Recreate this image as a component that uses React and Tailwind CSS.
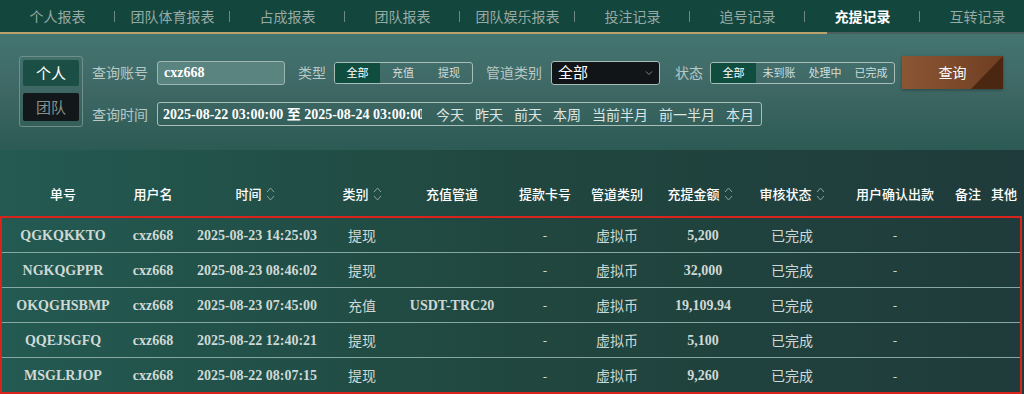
import React from 'react'

const tabs = ['个人报表', '团队体育报表', '占成报表', '团队报表', '团队娱乐报表', '投注记录', '追号记录', '充提记录', '互转记录']

const cols = 'grid grid-cols-[126px_54px_150px_64px_116px_70px_74px_92px_92px_114px_32px_40px]'

const rows = [
  { id: 'QGKQKKTO', time: '2025-08-23 14:25:03', type: '提现', pipe: '', amount: '5,200' },
  { id: 'NGKQGPPR', time: '2025-08-23 08:46:02', type: '提现', pipe: '', amount: '32,000' },
  { id: 'OKQGHSBMP', time: '2025-08-23 07:45:00', type: '充值', pipe: 'USDT-TRC20', amount: '19,109.94' },
  { id: 'QQEJSGFQ', time: '2025-08-22 12:40:21', type: '提现', pipe: '', amount: '5,100' },
  { id: 'MSGLRJOP', time: '2025-08-22 08:07:15', type: '提现', pipe: '', amount: '9,260' },
]

const cjk = "font-['Noto_Sans_CJK_SC',sans-serif]"
const serif = "font-['Liberation_Serif','Noto_Sans_CJK_SC',serif] font-bold"

const SortIcon = () => (
  <svg className="w-[9px] h-[16px] ml-1" viewBox="0 0 9 16" fill="none" stroke="#8ea19d" strokeWidth="1">
    <path d="M1 6 L4.5 2 L8 6" />
    <path d="M1 10 L4.5 14 L8 10" />
  </svg>
)

const Segments = ({ items }) => (
  <div className="flex h-[22px] border border-[#a9bdb9] rounded-[3px] overflow-hidden">
    {items.map((s, i) => (
      <div
        key={s}
        className={`flex items-center justify-center text-[11px] whitespace-nowrap ${
          i === 0 ? 'bg-[#0f4d3f] text-white w-[45px]' : 'text-[#d3ddda] w-[46px]'
        }`}
      >
        {s}
      </div>
    ))}
  </div>
)

const Header = ({ label, sort }) => (
  <div className="flex items-center justify-center text-[13px] text-white font-medium whitespace-nowrap">
    {label}
    {sort && <SortIcon />}
  </div>
)

export default function App() {
  return (
    <div className={`w-[1024px] h-[394px] overflow-hidden ${cjk} bg-[#21504a]`}>
      {/* top nav */}
      <div className="bg-[#13463d] h-[32px] flex overflow-hidden">
        {tabs.map((t, i) => (
          <div key={t} className="w-[115px] shrink-0 relative flex items-center justify-center">
            <span className={`text-[14px] whitespace-nowrap ${t === '充提记录' ? 'text-white font-bold' : 'text-[#98aaa4]'}`}>{t}</span>
            {i < tabs.length - 1 && <span className="absolute right-0 top-[11px] w-px h-[11px] bg-[#6f8983]" />}
          </div>
        ))}
      </div>
      <div className="flex h-[2px]">
        <div className="w-[827px] bg-[#bba46c]" />
        <div className="flex-1 bg-[#4b605e]" />
      </div>

      {/* filter panel */}
      <div className="h-[116px] bg-gradient-to-b from-[#447571] via-[#3e6764] to-[#2c5a54] flex pl-[19px] pt-[22px]">
        <div className="w-[64px] h-[71px] border border-[#6f8f8a] rounded-[3px] p-[3px] flex flex-col gap-[7px]">
          <div className="h-[26px] bg-[#1b4f45] rounded-[2px] text-white text-[15px] flex items-center justify-center">个人</div>
          <div className="h-[28px] bg-[#121719] rounded-[2px] text-[#86938e] text-[15px] flex items-center justify-center">团队</div>
        </div>
        <div className="ml-[9px] flex flex-col">
          <div className="flex items-center h-[33px]">
            <span className="text-[14px] text-[#b9c8c4] w-[65px]">查询账号</span>
            <div className={`w-[128px] h-[24px] bg-[#5a8480] border border-[#9db6b1] rounded-[3px] flex items-center pl-[6px] text-white text-[14px] ${serif}`}>cxz668</div>
            <span className="text-[14px] text-[#b9c8c4] ml-[13px] w-[36px]">类型</span>
            <Segments items={['全部', '充值', '提现']} />
            <span className="text-[14px] text-[#b9c8c4] ml-[13px] w-[65px]">管道类别</span>
            <div className="w-[109px] h-[24px] bg-[#111517] border border-[#a9bdb9] rounded-[3px] flex items-center justify-between pl-[6px] pr-[6px] text-white text-[15px]">
              <span>全部</span>
              <svg className="w-[8px] h-[6px]" viewBox="0 0 8 6" fill="none" stroke="#7d8a87" strokeWidth="1"><path d="M1 1.5 L4 4.5 L7 1.5" /></svg>
            </div>
            <span className="text-[14px] text-[#b9c8c4] ml-[15px] w-[35px]">状态</span>
            <Segments items={['全部', '未到账', '处理中', '已完成']} />
            <div className="ml-[7px] w-[101px] h-[33px] relative overflow-hidden bg-gradient-to-r from-[#8a5634] to-[#703e22] shadow-[0_1px_3px_rgba(0,0,0,0.35)] flex items-center justify-center text-white text-[14px]">
              <svg className="absolute right-0 top-0 w-[32px] h-[33px]" viewBox="0 0 32 33"><polygon points="32,0 32,33 0,33" fill="#4b2611" /></svg>
              <span className="relative">查询</span>
            </div>
          </div>
          <div className="flex items-center mt-[13px]">
            <span className="text-[14px] text-[#b9c8c4] w-[65px]">查询时间</span>
            <div className="w-[605px] h-[24px] border border-[#a9bdb9] rounded-[3px] flex items-center pl-[5px]">
              <div className={`w-[259px] shrink-0 overflow-hidden whitespace-nowrap text-white text-[14px] ${serif}`}>2025-08-22 03:00:00 至 2025-08-24 03:00:00</div>
              <div className="flex shrink-0 gap-[11px] ml-[14px] text-[14px] text-[#dde5e2] whitespace-nowrap">
                {['今天', '昨天', '前天', '本周', '当前半月', '前一半月', '本月'].map((d) => (
                  <span key={d}>{d}</span>
                ))}
              </div>
            </div>
          </div>
        </div>
      </div>

      {/* table */}
      <div className="bg-gradient-to-r from-[#235a52] via-[#20473f] to-[#1f3b3b]">
        <div className={`${cols} h-[66px] items-center pt-[22px]`}>
          <Header label="单号" />
          <Header label="用户名" />
          <Header label="时间" sort />
          <Header label="类别" sort />
          <Header label="充值管道" />
          <Header label="提款卡号" />
          <Header label="管道类别" />
          <Header label="充提金额" sort />
          <Header label="审核状态" sort />
          <Header label="用户确认出款" />
          <Header label="备注" />
          <Header label="其他" />
        </div>
        <div className="w-[1022px] h-[178px] border-2 border-[#d8241c] overflow-hidden">
          {rows.map((r, i) => (
            <div
              key={r.id}
              className={`${cols} -ml-[2px] h-[35px] items-center text-[13px] text-[#cfd9d5] whitespace-nowrap ${i < rows.length - 1 ? 'border-b border-[#86a8a2]' : ''}`}
            >
              <div className={`text-center text-[14px] ${serif}`}>{r.id}</div>
              <div className={`text-center text-[14px] ${serif}`}>cxz668</div>
              <div className={`text-center text-[14px] pl-[4px] ${serif}`}>{r.time}</div>
              <div className="text-center text-[14px]">{r.type}</div>
              <div className={`text-center text-[14px] ${serif}`}>{r.pipe}</div>
              <div className="text-center">-</div>
              <div className="text-center text-[14px]">虚拟币</div>
              <div className={`text-center text-[14px] pl-[6px] ${serif}`}>{r.amount}</div>
              <div className="text-center text-[14px]">已完成</div>
              <div className="text-center">-</div>
              <div />
              <div />
            </div>
          ))}
        </div>
      </div>
    </div>
  )
}
